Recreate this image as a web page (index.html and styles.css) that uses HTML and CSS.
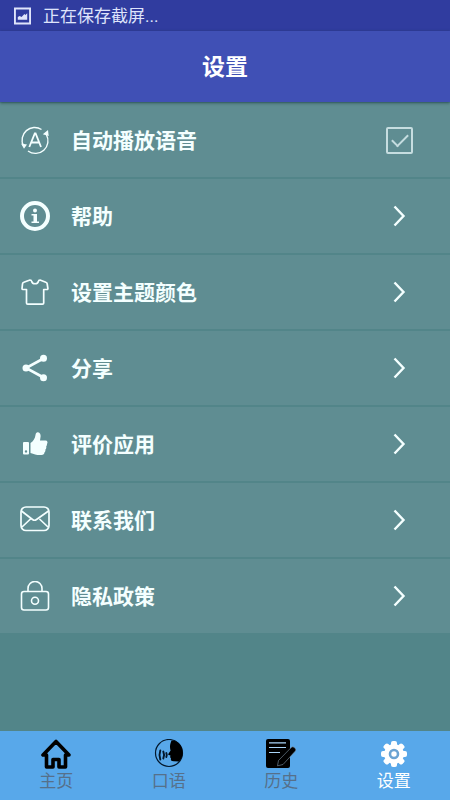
FILE: index.html
```html
<!DOCTYPE html>
<html lang="zh-CN">
<head>
<meta charset="utf-8">
<meta name="viewport" content="width=device-width, initial-scale=1">
<title>设置</title>
<link rel="stylesheet" href="styles.css">
</head>
<body>
<div class="status">
  <svg class="status-icon" viewBox="0 0 18 18" aria-hidden="true"><path fill="currentColor" fill-rule="evenodd" d="M0 0h18v18H0zM2 2v14h14V2zM4 13v-3l2-1 2 1 3-3 1 1 2-2v7z"/></svg>
  <span>正在保存截屏...</span>
</div>
<header class="header"><h1 class="title">设置</h1></header>
<main class="content">
  <ul class="list">
    <li>
      <label class="row" for="autoplay">
        <svg class="icon" viewBox="0 0 30 30" aria-hidden="true"><g fill="none" stroke="currentColor" stroke-width="1.400"><path d="M3.300 20.500A12.600 12.600 0 0 1 21.500 4.500M26.300 9.500A12.600 12.600 0 0 1 8 26"/><path stroke-width="1.800" d="M9.300 22 14.800 8.500h.8L21 22M11.300 17.500H19"/></g><path fill="currentColor" d="m22.800 9.300 5.200-4.300.7 6zM1 18.500l6 1-3 4.200z"/></svg>
        <span class="label">自动播放语音</span>
        <input class="check" type="checkbox" id="autoplay" checked>
      </label>
    </li>
    <li>
      <a class="row" href="#help">
        <svg class="icon" viewBox="0 0 30 30" aria-hidden="true"><circle cx="15" cy="15" r="13" fill="none" stroke="currentColor" stroke-width="4"/><circle cx="15" cy="9.500" r="2" fill="currentColor"/><path fill="currentColor" d="M11.500 13H17v7.500h2V22h-7.500v-1.500h2v-6h-2z"/></svg>
        <span class="label">帮助</span>
        <svg class="chevron" viewBox="0 0 14 22" aria-hidden="true"><path d="m1.500 1.500 9 9.500-9 9.500"/></svg>
      </a>
    </li>
    <li>
      <a class="row" href="#theme">
        <svg class="icon" viewBox="0 0 30 30" aria-hidden="true"><path fill="none" stroke="currentColor" stroke-width="1.700" stroke-linejoin="round" d="M10 3 3.800 5.200Q2.800 5.500 2.500 7L2 11.500Q2 12.500 3 12.500H6.500V26Q6.500 27.200 7.700 27.200H22.500Q23.700 27.200 23.700 26V12.500H27Q28 12.500 27.900 11.500L27.200 7Q27 5.500 25.800 5.200L20 3Q18.500 3 18.400 4.500C17.500 7.500 12.500 7.500 11.700 4.500Q11.500 3 10 3Z"/></svg>
        <span class="label">设置主题颜色</span>
        <svg class="chevron" viewBox="0 0 14 22" aria-hidden="true"><path d="m1.500 1.500 9 9.500-9 9.500"/></svg>
      </a>
    </li>
    <li>
      <a class="row" href="#share">
        <svg class="icon" viewBox="0 0 30 30" aria-hidden="true"><path fill="none" stroke="currentColor" stroke-width="2.600" d="M23.500 5.500 6 15l17.500 9.500"/><g fill="currentColor"><circle cx="23.500" cy="5.200" r="3.500"/><circle cx="6" cy="15" r="3.500"/><circle cx="23.500" cy="24.800" r="3.500"/></g></svg>
        <span class="label">分享</span>
        <svg class="chevron" viewBox="0 0 14 22" aria-hidden="true"><path d="m1.500 1.500 9 9.500-9 9.500"/></svg>
      </a>
    </li>
    <li>
      <a class="row" href="#rate">
        <svg class="icon" viewBox="0 0 30 30" aria-hidden="true"><path fill="currentColor" fill-rule="evenodd" d="M4 13h4q1 0 1 1v10.500q0 1-1 1H4q-1 0-1-1V14q0-1 1-1zm2 8.200a1.200 1.200 0 1 0 0 2.400 1.200 1.200 0 0 0 0-2.400zM10.500 14c3-2 4.500-4.500 5-8 .3-2.200 1.200-3 2.500-2.800 2 .4 2.800 2 2.600 4.300L20 11.500h5.500c2 0 2.500 2 1.500 3.500 0 1.300-.4 2-.8 2.600.3 1.300 0 2.200-.8 3 .2 1.300-.2 2.300-1 2.900 0 1.500-1 2.500-2.900 2.500-4 .4-7-.5-11-2z"/></svg>
        <span class="label">评价应用</span>
        <svg class="chevron" viewBox="0 0 14 22" aria-hidden="true"><path d="m1.500 1.500 9 9.500-9 9.500"/></svg>
      </a>
    </li>
    <li>
      <a class="row" href="#contact">
        <svg class="icon" viewBox="0 0 30 30" aria-hidden="true"><g fill="none" stroke="currentColor" stroke-width="1.700"><rect x="1" y="2" width="28" height="23.500" rx="5"/><path stroke-linejoin="round" d="m1.500 6 11 8.500q2 1.500 4 0l12-8.500M2 22l8.500-8M28 22l-8.500-8"/></g></svg>
        <span class="label">联系我们</span>
        <svg class="chevron" viewBox="0 0 14 22" aria-hidden="true"><path d="m1.500 1.500 9 9.500-9 9.500"/></svg>
      </a>
    </li>
    <li>
      <a class="row" href="#privacy">
        <svg class="icon" viewBox="0 0 30 30" aria-hidden="true"><g fill="none" stroke="currentColor" stroke-width="1.600"><rect x="1.500" y="10.500" width="27" height="18.500" rx="2.500"/><path d="M8 10.500V7.500a7 7 0 0 1 14 0v3"/><circle cx="15" cy="19.800" r="3.500"/></g></svg>
        <span class="label">隐私政策</span>
        <svg class="chevron" viewBox="0 0 14 22" aria-hidden="true"><path d="m1.500 1.500 9 9.500-9 9.500"/></svg>
      </a>
    </li>
  </ul>
</main>
<nav class="tabs">
  <a class="tab" href="#home">
    <svg class="tab-icon" viewBox="0 0 30 30" aria-hidden="true"><path fill="none" stroke="#000" stroke-width="3.600" stroke-linejoin="round" d="M15 2.500 2 16h3.500v12H12v-7.500h6V28h6.500V16H28z"/></svg>
    <span>主页</span>
  </a>
  <a class="tab" href="#speaking">
    <svg class="tab-icon" viewBox="0 0 30 30" aria-hidden="true"><circle cx="15" cy="14" r="13.500" fill="none" stroke="#04182c" stroke-width="1.200"/><path d="M17.500 1.500C24 1 28.700 7 28.700 14c0 3.500-1.500 6.500-3.700 8.500l-5.500-.3c-2.300 0-3-1-2.500-2.700l-1-1.500.6-1.200-2.600-1.300 2.600-4c-.6-3-1.200-5 .9-10z"/><g fill="none" stroke="#04182c" stroke-linecap="round" stroke-width="1.900"><path d="M12.300 14q1 2 0 4M9.300 12.500q1.600 3.500 0 7M6.300 11.500q-1.500 4 0 9"/></g></svg>
    <span>口语</span>
  </a>
  <a class="tab" href="#history">
    <svg class="tab-icon" viewBox="0 0 30 30" aria-hidden="true"><rect y="0" width="24" height="29" rx="2"/><path stroke="#a9d4f7" stroke-width="1.200" d="M3 3.800h17M3 8.500h17M3 13.500h11"/><path stroke="#8296a8" stroke-width=".6" d="m12.500 21.500 13-13.300q1.500-1 2.700.2l1.200 1.300q1 1.200 0 2.300L17 25.500l-5.500 1.300z"/></svg>
    <span>历史</span>
  </a>
  <a class="tab tab-active" href="#settings" aria-current="page">
    <svg class="tab-icon" viewBox="0 0 30 30" aria-hidden="true"><g fill="currentColor"><g id="teeth"><rect x="12" y="2" width="6" height="26" rx="2"/><rect x="2" y="12" width="26" height="6" rx="2"/></g><use href="#teeth" transform="rotate(45 15 15)"/><circle cx="15" cy="15" r="10"/></g><circle cx="15" cy="15" r="4" fill="none" stroke="#6aa3d3" stroke-width="2.600"/></svg>
    <span>设置</span>
  </a>
</nav>
</body>
</html>
```

FILE: styles.css
```css
* {
  box-sizing: border-box;
}

body {
  margin: 0;
  min-height: 100vh;
  display: flex;
  flex-direction: column;
  background: #528589;
  color: #f4ffff;
  font-family: Roboto, "Noto Sans CJK SC", sans-serif;
}

a {
  color: inherit;
  text-decoration: none;
}

svg {
  display: block;
  flex: none;
}

.status {
  display: flex;
  align-items: center;
  gap: 12px;
  padding: 4px 14px 3px;
  background: #303c9f;
  color: #dfe4fb;
  font-size: 17px;
  line-height: 24px;
}

.status-icon {
  width: 17px;
  height: 18px;
}

.header {
  position: relative;
  padding: 21px 16px 19px;
  background: #4050b5;
  box-shadow: 0 1px 3px rgba(20, 50, 50, 0.6);
  text-align: center;
}

.title {
  margin: 0;
  color: #fff;
  font-size: 23px;
  line-height: 31px;
  font-weight: 700;
}

.content {
  flex: 1;
}

.list {
  display: grid;
  gap: 2px;
  margin: 0;
  padding: 1px 0 0;
  list-style: none;
}

.row {
  display: flex;
  align-items: center;
  gap: 21px;
  min-height: 74px;
  padding: 0 37px 0 20px;
  background: #5f8d92;
}

.icon {
  width: 30px;
  height: 30px;
}

.label {
  flex: 1;
  padding-top: 2px;
  font-size: 21px;
  line-height: 30px;
  font-weight: 700;
}

.chevron {
  width: 14px;
  height: 22px;
  margin-right: 6px;
  fill: none;
  stroke: currentColor;
  stroke-width: 2.4;
}

.check {
  appearance: none;
  display: grid;
  place-items: center;
  width: 27px;
  height: 27px;
  margin: 0;
  border: 2px solid #c6dde0;
  border-radius: 2px;
}

.check:checked::after {
  content: "";
  width: 14px;
  height: 7px;
  margin-bottom: 4px;
  border: solid #c6dde0;
  border-width: 0 0 2px 2px;
  transform: rotate(-45deg);
}

.tabs {
  display: grid;
  grid-template-columns: repeat(4, 1fr);
  background: #58a8ea;
}

.tab {
  display: flex;
  flex-direction: column;
  align-items: center;
  padding: 8px 0 7px;
  color: #56708a;
  font-size: 17px;
  line-height: 24px;
}

.tab-icon {
  width: 30px;
  height: 30px;
}

.tab-active {
  color: #fff;
}
```
